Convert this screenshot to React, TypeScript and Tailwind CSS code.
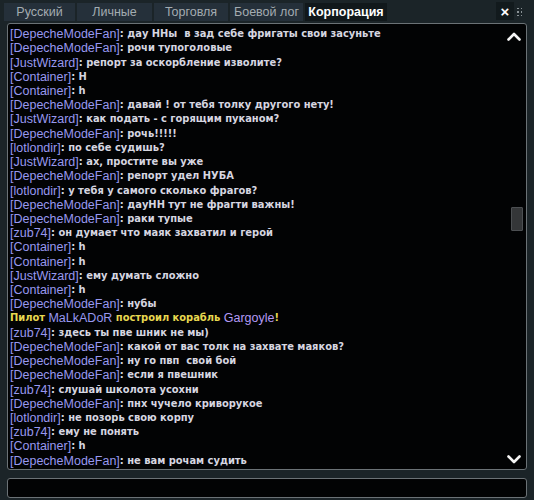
import React from "react";

type Line = { name?: string; text: string; system?: boolean };

const lines: Line[] = [
  { name: "DepecheModeFan", text: "дау ННы  в зад себе фригаты свои засуньте" },
  { name: "DepecheModeFan", text: "рочи тупоголовые" },
  { name: "JustWizard", text: "репорт за оскорбление изволите?" },
  { name: "Container", text: "H" },
  { name: "Container", text: "h" },
  { name: "DepecheModeFan", text: "давай ! от тебя толку другого нету!" },
  { name: "JustWizard", text: "как подать - с горящим пуканом?" },
  { name: "DepecheModeFan", text: "рочь!!!!!" },
  { name: "lotlondir", text: "по себе судишь?" },
  { name: "JustWizard", text: "ах, простите вы уже" },
  { name: "DepecheModeFan", text: "репорт удел НУБА" },
  { name: "lotlondir", text: "у тебя у самого сколько фрагов?" },
  { name: "DepecheModeFan", text: "дауНН тут не фрагти важны!" },
  { name: "DepecheModeFan", text: "раки тупые" },
  { name: "zub74", text: "он думает что маяк захватил и герой" },
  { name: "Container", text: "h" },
  { name: "Container", text: "h" },
  { name: "JustWizard", text: "ему думать сложно" },
  { name: "Container", text: "h" },
  { name: "DepecheModeFan", text: "нубы" },
  { system: true, text: "" },
  { name: "zub74", text: "здесь ты пве шник не мы)" },
  { name: "DepecheModeFan", text: "какой от вас толк на захвате маяков?" },
  { name: "DepecheModeFan", text: "ну го пвп  свой бой" },
  { name: "DepecheModeFan", text: "если я пвешник" },
  { name: "zub74", text: "слушай школота усохни" },
  { name: "DepecheModeFan", text: "пнх чучело криворукое" },
  { name: "lotlondir", text: "не позорь свою корпу" },
  { name: "zub74", text: "ему не понять" },
  { name: "Container", text: "h" },
  { name: "DepecheModeFan", text: "не вам рочам судить" },
];

const tabs = [
  { label: "Русский", w: "w-[71px]" },
  { label: "Личные", w: "w-[75px]" },
  { label: "Торговля", w: "w-[74px]" },
  { label: "Боевой лог", w: "w-[73px]" },
  { label: "Корпорация", w: "w-[82px]", active: true },
];

const nameFont = "font-['Liberation_Sans',sans-serif] text-[12.5px] leading-[14px] text-[#9898f0]";
const msgFont =
  "font-['DejaVu_Sans_Condensed','DejaVu_Sans',sans-serif] text-[11px] leading-[14px] font-semibold text-[#d6d6e0]";
const sysFont =
  "font-['DejaVu_Sans_Condensed','DejaVu_Sans',sans-serif] text-[11px] leading-[14px] font-semibold text-[#e8d850]";

function ChatLine({ line }: { line: Line }) {
  if (line.system) {
    return (
      <div className="flex h-[14.23px] items-center whitespace-pre">
        <span className={sysFont}>Пилот </span>
        <span className={nameFont}>MaLkADoR</span>
        <span className={sysFont}> построил корабль </span>
        <span className="font-['Liberation_Sans',sans-serif] text-[12.5px] leading-[14px] text-[#b49af5]">Gargoyle</span>
        <span className={sysFont}>!</span>
      </div>
    );
  }
  return (
    <div className="flex h-[14.23px] items-center whitespace-pre">
      <span className={nameFont}>[{line.name}]</span>
      <span className={msgFont}>: {line.text}</span>
    </div>
  );
}

function Chevron({ down }: { down?: boolean }) {
  return (
    <svg width="14" height="9" viewBox="0 0 14 9" className={down ? "rotate-180" : ""}>
      <path d="M1.5 7.5 L7 2 L12.5 7.5" fill="none" stroke="#f4f4f4" strokeWidth="2.6" strokeLinecap="round" strokeLinejoin="round" />
    </svg>
  );
}

export default function App() {
  return (
    <div className="flex h-[500px] w-[534px] flex-col bg-[#1b2428] font-['Liberation_Sans',sans-serif]">
      <div className="flex h-[21px] items-end px-[4px] pt-[3px]">
        <div className="flex h-full gap-[2px]">
          {tabs.map((t) => (
            <div
              key={t.label}
              className={`flex ${t.w} items-center justify-center text-[12.5px] ${
                t.active ? "bg-[#11181b] font-bold text-white" : "bg-[#25303a] text-[#a4acb1]"
              }`}
            >
              {t.label}
            </div>
          ))}
        </div>
        <div className="flex-1" />
        <div className="mb-[1px] flex h-[18px] w-[18px] items-center justify-center bg-[#121a1d] text-[15px] font-bold leading-none text-white">
          ×
        </div>
        <div className="ml-[3px] mr-[8px] mb-[5px] grid grid-cols-2 gap-[2px]">
          {Array.from({ length: 6 }).map((_, i) => (
            <div key={i} className="h-[1.5px] w-[1.5px] bg-[#8a9296]" />
          ))}
        </div>
      </div>

      <div className="mx-[7px] mt-[2px] flex h-[447px] rounded-[3px] border border-[#6b7276] bg-[#020304]">
        <div className="flex-1 overflow-hidden pl-[2px] pt-[3px]">
          {lines.map((l, i) => (
            <ChatLine key={i} line={l} />
          ))}
        </div>
        <div className="relative w-[20px]">
          <div className="absolute left-[1px] top-[8px]">
            <Chevron />
          </div>
          <div className="absolute left-[5px] top-[183px] h-[24px] w-[12px] rounded-[1px] border border-[#4c4f52] bg-[#343638]" />
          <div className="absolute bottom-[5px] left-[1px]">
            <Chevron down />
          </div>
        </div>
      </div>

      <div className="mx-[7px] mt-[8px] h-[20px] rounded-[3px] border border-[#6b7276] bg-[#020304]" />
    </div>
  );
}
